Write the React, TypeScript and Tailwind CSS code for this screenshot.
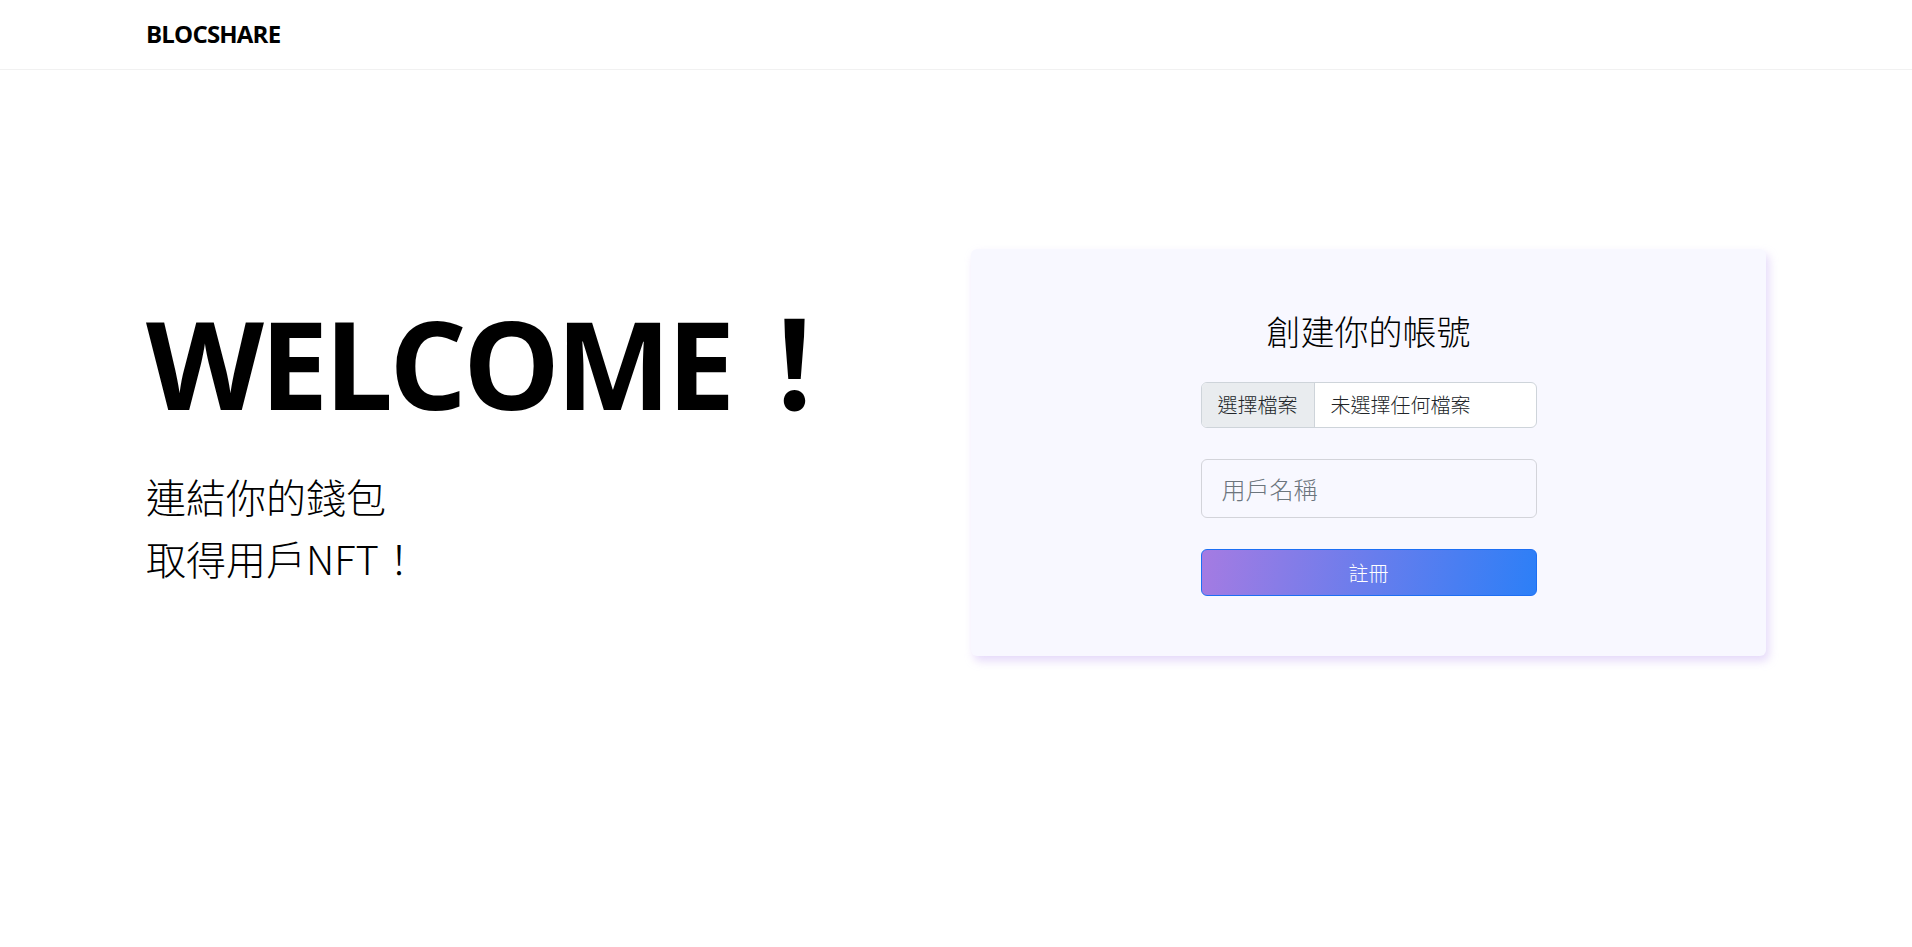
import React from 'react';

const latin = "font-['Open_Sans','Noto_Sans_CJK_TC',sans-serif]";
const cjk = "font-['Noto_Sans_CJK_TC','Open_Sans',sans-serif]";

const Header: React.FC = () => {
  return (
    <header className="h-[70px] border-b border-[#f1f1f1] bg-white px-[146px] flex items-center">
      <span className={`${latin} text-[24px] font-bold text-black tracking-[-0.8px] -mt-[2px]`}>BLOCSHARE</span>
    </header>
  );
};

const SignupCard: React.FC = () => {
  return (
    <div className="w-[795px] h-[407px] rounded-md bg-[#f8f8ff] shadow-[3px_5px_10px_rgba(190,160,240,0.4)] flex flex-col items-center pt-[61px]">
      <h2 className={`${cjk} text-[34px] font-light leading-[41px] text-black`}>創建你的帳號</h2>
      <div className="mt-[31px] w-[336px] flex flex-col gap-[31px]">
        <label className={`${cjk} h-[46px] flex items-stretch border border-[#ced4da] rounded-md overflow-hidden bg-white text-[20px] font-light text-[#212529] cursor-pointer`}>
          <span className="bg-[#e9ecef] border-r border-[#ced4da] px-4 flex items-center">選擇檔案</span>
          <span className="px-4 flex items-center">未選擇任何檔案</span>
          <input type="file" className="hidden" />
        </label>
        <input
          type="text"
          placeholder="用戶名稱"
          className={`${cjk} h-[59px] w-full rounded-md border border-[#d3d4da] bg-transparent px-5 text-[24px] font-light text-[#212529] placeholder:text-[#6c757d] outline-none`}
        />
        <button
          type="button"
          className={`${cjk} h-[47px] w-full rounded-md border border-[#1d6ff4] bg-[linear-gradient(100deg,#a57be2,#2c7ff7)] text-white text-[20px] font-light`}
        >
          註冊
        </button>
      </div>
    </div>
  );
};

export default function App() {
  return (
    <div className="min-h-screen bg-white">
      <Header />
      <main className="px-[131px] pt-[179px]">
        <div className="flex items-center">
          <div className="w-1/2 px-[15px] pb-[32px]">
            <h1 className={`${latin} text-[122px] font-bold leading-[1.2] text-black tracking-[-4px]`}>
              WELCOME<span className="font-['Noto_Sans_CJK_TC',sans-serif] ml-[2px]">！</span>
            </h1>
            <p className={`${cjk} mt-[28px] text-[40px] font-light leading-[62px] text-black`}>
              連結你的錢包
              <br />
              取得用戶NFT！
            </p>
          </div>
          <div className="w-1/2 px-[15px]">
            <SignupCard />
          </div>
        </div>
      </main>
    </div>
  );
}
